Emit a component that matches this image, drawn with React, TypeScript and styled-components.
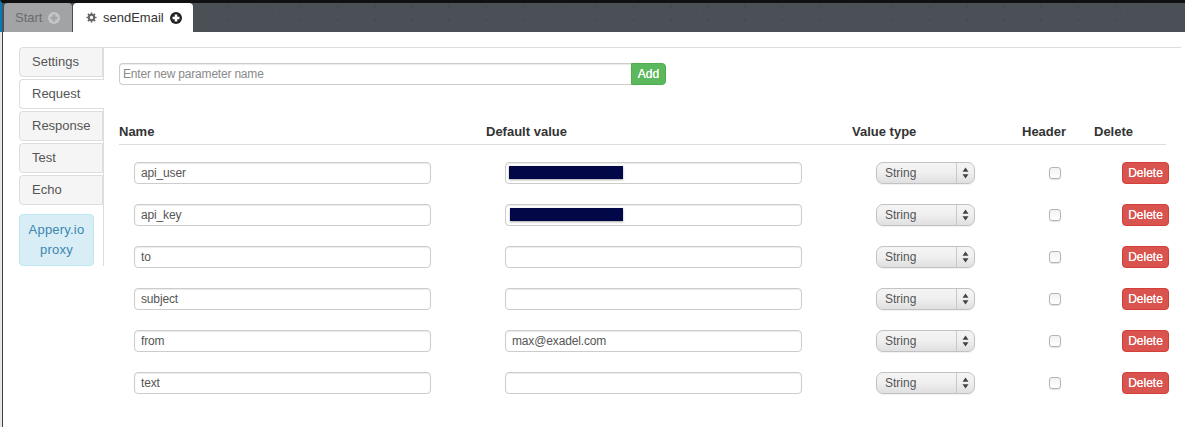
import styled, { createGlobalStyle } from "styled-components";

const GlobalStyle = createGlobalStyle`
  html, body {
    margin: 0;
    padding: 0;
    background: #fff;
    overflow: hidden;
  }
  body {
    font-family: "Helvetica Neue", "Liberation Sans", Arial, sans-serif;
    font-size: 12px;
    color: #333;
  }
`;

const Page = styled.div`
  width: 1185px;
  height: 427px;
  box-sizing: border-box;
  padding-left: 3px;
  background: linear-gradient(to right, #e6e7e8 2px, #3d4247 2px, #3d4247 3px, #fff 3px);
  overflow: hidden;
`;

const TopBar = styled.div`
  height: 32px;
  box-sizing: border-box;
  margin-left: -3px;
  padding-left: 2px;
  display: flex;
  gap: 1px;
  background-color: #4b5056;
  background-image:
    radial-gradient(circle at 3px 4px, rgba(30, 32, 36, 0.12) 1px, transparent 1.5px),
    radial-gradient(circle at 9px 11px, rgba(110, 115, 122, 0.1) 1px, transparent 1.5px);
  background-size: 37px 13px, 53px 19px;
  border-top: 3px solid #111;
  border-left: 2px solid #0a79b8;
`;

const Tab = styled.div<{ $active?: boolean }>`
  height: 29px;
  box-sizing: border-box;
  display: flex;
  align-items: center;
  gap: 6px;
  padding: ${(p) => (p.$active ? "0 0 0 13px" : "0 0 0 11px")};
  width: ${(p) => (p.$active ? "120px" : "68px")};
  border-radius: 4px 4px 0 0;
  font-size: 13px;
  background: ${(p) => (p.$active ? "#fff" : "#a2a3a4")};
  color: ${(p) => (p.$active ? "#333" : "#6a6b6d")};
`;

const Body = styled.div`
  display: flex;
  padding: 15px 0 0 16px;
`;

const Sidebar = styled.div`
  width: 85px;
  flex: none;
  height: 219px;
  box-sizing: border-box;
  border-right: 1px solid #ddd;
  display: flex;
  flex-direction: column;
  gap: 2px;
`;

const SideTab = styled.div<{ $active?: boolean }>`
  height: 30px;
  box-sizing: border-box;
  margin-right: ${(p) => (p.$active ? "-1px" : "0")};
  padding: 0 12px 2px;
  display: flex;
  align-items: center;
  font-size: 13px;
  color: #555;
  background: ${(p) => (p.$active ? "#fff" : "#f5f5f5")};
  border: 1px solid #ddd;
  border-right: ${(p) => (p.$active ? "0" : "1px solid #ddd")};
  border-radius: 4px 0 0 4px;
`;

const ProxyNote = styled.div`
  margin-top: 7px;
  width: 75px;
  height: 52px;
  box-sizing: border-box;
  border: 1px solid #bce8f1;
  border-radius: 4px;
  background: #d9edf7;
  color: #3a87ad;
  font-size: 13px;
  line-height: 20px;
  letter-spacing: 0.2px;
  text-align: center;
  padding-top: 5px;
`;

const Main = styled.div`
  width: 1077px;
  flex: none;
  box-sizing: border-box;
  border-top: 1px solid #ddd;
  padding: 15px 0 0 15px;
`;

const AddRow = styled.div`
  display: flex;
  height: 22px;
`;

const NewParam = styled.input`
  width: 512px;
  height: 22px;
  box-sizing: border-box;
  padding: 0 3px;
  border: 1px solid #ccc;
  border-right: 0;
  border-radius: 4px 0 0 4px;
  font: 12px "Helvetica Neue", "Liberation Sans", Arial, sans-serif;
  letter-spacing: -0.2px;
  box-shadow: inset 0 1px 1px rgba(0, 0, 0, 0.08);
  &::placeholder {
    color: #8a8a8a;
    opacity: 1;
  }
`;

const AddButton = styled.button`
  width: 35px;
  height: 22px;
  padding: 0;
  border: 1px solid #4cae4c;
  border-radius: 0 4px 4px 0;
  background: #5cb85c;
  color: #fff;
  font: 12px "Helvetica Neue", "Liberation Sans", Arial, sans-serif;
  text-shadow: 0 0 0.6px #fff;
`;

const Columns = styled.div`
  display: grid;
  grid-template-columns: 367px 366px 170px 72px 72px;
  width: 1047px;
`;

const HeaderRow = styled(Columns)`
  margin-top: 35px;
  height: 22px;
  align-items: center;
  border-bottom: 1px solid #ddd;
  padding-bottom: 2px;
  font-size: 13px;
  font-weight: bold;
  color: #333;
`;

const Row = styled(Columns)`
  height: 22px;
  align-items: center;
  margin-top: 20px;
`;

const FirstRow = styled(Row)`
  margin-top: 17px;
`;

const Cell = styled.div<{ $indent: number }>`
  position: relative;
  padding-left: ${(p) => p.$indent}px;
  display: flex;
  align-items: center;
  height: 22px;
`;

const TextInput = styled.input`
  width: 297px;
  height: 22px;
  box-sizing: border-box;
  padding: 0 6px;
  border: 1px solid #ccc;
  border-radius: 4px;
  background: #fff;
  color: #555;
  font: 12px "Helvetica Neue", "Liberation Sans", Arial, sans-serif;
  letter-spacing: -0.15px;
  box-shadow: inset 0 1px 1px rgba(0, 0, 0, 0.08);
`;

const Redaction = styled.span<{ $left: number }>`
  position: absolute;
  left: ${(p) => p.$left}px;
  top: 4px;
  width: ${(p) => 137 - p.$left}px;
  height: 13px;
  background: #020748;
  box-shadow: 0 1px 2px rgba(0, 0, 0, 0.35);
`;

const TypeSelect = styled.div`
  width: 99px;
  height: 22px;
  box-sizing: border-box;
  display: flex;
  align-items: center;
  border: 1px solid #c2c2c2;
  border-radius: 7px;
  background: linear-gradient(#f4f4f4, #f0f0f0 45%, #e0e0e0);
  box-shadow: 0 1px 1px rgba(0, 0, 0, 0.06);
  color: #555;
  font-size: 12px;
`;

const TypeLabel = styled.span`
  flex: 1;
  padding-left: 8px;
`;

const TypeArrows = styled.span`
  width: 17px;
  height: 20px;
  display: flex;
  align-items: center;
  justify-content: center;
  border-left: 1px solid #c8c8c8;
`;

const HeaderCheck = styled.input`
  appearance: none;
  width: 12px;
  height: 12px;
  margin: 0;
  border: 1px solid #b4b4b4;
  border-radius: 3px;
  background: linear-gradient(#f2f2f2, #fff);
  box-shadow: 0 1px 1px rgba(0, 0, 0, 0.12);
`;

const DeleteButton = styled.button`
  flex: none;
  width: 47px;
  height: 22px;
  padding: 0;
  border: 1px solid #d43f3a;
  border-radius: 4px;
  background: #d9534f;
  color: #fff;
  font: 12px "Helvetica Neue", "Liberation Sans", Arial, sans-serif;
  text-shadow: 0 0 0.6px #fff;
`;

function CloseBadge({ color, cross }: { color: string; cross: string }) {
  return (
    <svg width="12" height="12" viewBox="0 0 12 12">
      <circle cx="6" cy="6" r="6" fill={color} />
      <path d="M6 2.5v7M2.5 6h7" stroke={cross} strokeWidth="2.6" />
    </svg>
  );
}

function Gear() {
  return (
    <svg width="11" height="11" viewBox="0 0 12 12">
      <circle cx="6" cy="6" r="2.9" fill="none" stroke="#666" strokeWidth="2.2" />
      <path
        d="M6 .5v2M6 9.5v2M.5 6h2M9.5 6h2M2.1 2.1l1.4 1.4M8.5 8.5l1.4 1.4M2.1 9.9l1.4-1.4M8.5 3.5l1.4-1.4"
        stroke="#666"
        strokeWidth="1.8"
      />
    </svg>
  );
}

function SelectArrows() {
  return (
    <svg width="7" height="12" viewBox="0 0 7 12">
      <path d="M3.5 0.5L6.5 4.8H.5zM3.5 11.5L.5 7.2h6z" fill="#444" />
    </svg>
  );
}

const sideTabs = ["Settings", "Request", "Response", "Test", "Echo"];

const params = [
  { name: "api_user", value: "", redactLeft: 4 },
  { name: "api_key", value: "", redactLeft: 5 },
  { name: "to", value: "" },
  { name: "subject", value: "" },
  { name: "from", value: "max@exadel.com" },
  { name: "text", value: "" },
];

function ParamRow({ param, first }: { param: (typeof params)[number]; first: boolean }) {
  const Wrap = first ? FirstRow : Row;
  return (
    <Wrap>
      <Cell $indent={15}>
        <TextInput defaultValue={param.name} />
      </Cell>
      <Cell $indent={19}>
        <TextInput defaultValue={param.value} />
        {param.redactLeft !== undefined && <Redaction $left={19 + param.redactLeft} />}
      </Cell>
      <Cell $indent={24}>
        <TypeSelect>
          <TypeLabel>String</TypeLabel>
          <TypeArrows>
            <SelectArrows />
          </TypeArrows>
        </TypeSelect>
      </Cell>
      <Cell $indent={27}>
        <HeaderCheck type="checkbox" />
      </Cell>
      <Cell $indent={28}>
        <DeleteButton>Delete</DeleteButton>
      </Cell>
    </Wrap>
  );
}

export default function App() {
  return (
    <Page>
      <GlobalStyle />
      <TopBar>
        <Tab>
          Start
          <CloseBadge color="#c4c5c6" cross="#a2a3a4" />
        </Tab>
        <Tab $active>
          <Gear />
          sendEmail
          <CloseBadge color="#222" cross="#fff" />
        </Tab>
      </TopBar>
      <Body>
        <Sidebar>
          {sideTabs.map((t) => (
            <SideTab key={t} $active={t === "Request"}>
              {t}
            </SideTab>
          ))}
          <ProxyNote>
            Appery.io
            <br />
            proxy
          </ProxyNote>
        </Sidebar>
        <Main>
          <AddRow>
            <NewParam placeholder="Enter new parameter name" />
            <AddButton>Add</AddButton>
          </AddRow>
          <HeaderRow>
            <span>Name</span>
            <span>Default value</span>
            <span>Value type</span>
            <span>Header</span>
            <span>Delete</span>
          </HeaderRow>
          {params.map((p, i) => (
            <ParamRow key={p.name} param={p} first={i === 0} />
          ))}
        </Main>
      </Body>
    </Page>
  );
}
